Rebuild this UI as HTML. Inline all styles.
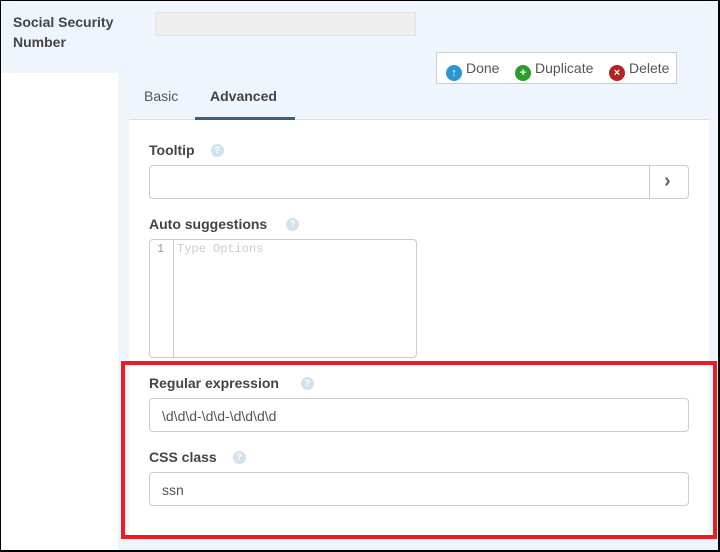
<!DOCTYPE html>
<html><head><meta charset="utf-8"><style>
*{box-sizing:border-box;margin:0;padding:0}
body{width:720px;height:552px;position:relative;overflow:hidden;background:#eff5fd;font-family:"Liberation Sans",Arial,sans-serif;color:#333}
.a{position:absolute}
.lbl{font-size:14px;font-weight:bold;color:#444}
.q{display:inline-block;width:13px;height:13px;border-radius:50%;background:#cfe2ee;color:#fff;font-size:9px;text-align:center;line-height:13px;margin-left:16px;vertical-align:2px}
.inp{border:1px solid #ccc;border-radius:4px;background:#fff;height:34px;font-size:14px;color:#555;padding:9px 12px}
.ic{display:inline-block;width:16px;height:16px;border-radius:50%;color:#fff;font-size:11px;font-weight:bold;text-align:center;line-height:16px;vertical-align:-3px;margin-right:4px}
</style></head><body>
<div class="a" style="left:0;top:0;width:720px;height:1px;background:#000"></div>
<div class="a" style="left:0;top:0;width:1px;height:552px;background:#000"></div>
<div class="a" style="right:0;top:0;width:2px;height:552px;background:#000"></div>
<div class="a" style="left:0;bottom:0;width:720px;height:2px;background:#000"></div>
<div class="a" style="left:1px;top:73px;width:117px;height:477px;background:#fff"></div>
<div class="a lbl" style="left:13px;top:12px;line-height:20px">Social Security<br>Number</div>
<div class="a" style="left:155px;top:12px;width:261px;height:24px;background:#eee;border:1px solid #e3e3e3"></div>
<div class="a" style="left:436px;top:52px;width:241px;height:32px;background:#fff;border:1px solid #ccc;font-size:14px;color:#555;padding:7px 0 0 9px;white-space:nowrap">
<span class="ic" style="background:#2e95d3">↑</span>Done&nbsp;&nbsp;&nbsp;&nbsp;<span class="ic" style="background:#2a9d2a">+</span>Duplicate&nbsp;&nbsp;&nbsp;&nbsp;<span class="ic" style="background:#b52222">×</span>Delete</div>
<div class="a" style="left:144px;top:88px;font-size:14px;color:#555">Basic</div>
<div class="a" style="left:210px;top:88px;font-size:14px;font-weight:bold;color:#444">Advanced</div>
<div class="a" style="left:129px;top:119px;width:580px;height:420px;background:#fff;border-top:1px solid #ddd"></div>
<div class="a" style="left:195px;top:117px;width:100px;height:3px;background:#3f5f78"></div>
<div class="a lbl" style="left:149px;top:142px">Tooltip<span class="q">?</span></div>
<div class="a inp" style="left:149px;top:165px;width:540px"></div>
<div class="a" style="left:649px;top:166px;width:1px;height:32px;background:#ccc"></div>
<div class="a" style="left:664px;top:170px;font-size:20px;font-weight:bold;color:#666">›</div>
<div class="a lbl" style="left:149px;top:216px">Auto suggestions<span class="q" style="margin-left:19px">?</span></div>
<div class="a" style="left:149px;top:239px;width:268px;height:119px;border:1px solid #ccc;border-radius:4px;background:#fff"></div>
<div class="a" style="left:173px;top:240px;width:1px;height:117px;background:#ccc"></div>
<div class="a" style="left:157px;top:242px;font-family:'Liberation Mono',monospace;font-size:12px;color:#999">1</div>
<div class="a" style="left:177px;top:242px;font-family:'Liberation Mono',monospace;font-size:12px;color:#ccc">Type Options</div>
<div class="a" style="left:121px;top:361px;width:596px;height:178px;border:4px solid #ec1c24"></div>
<div class="a lbl" style="left:149px;top:375px">Regular expression<span class="q" style="margin-left:22px">?</span></div>
<div class="a inp" style="left:149px;top:398px;width:540px">\d\d\d-\d\d-\d\d\d\d</div>
<div class="a lbl" style="left:149px;top:449px">CSS class<span class="q">?</span></div>
<div class="a inp" style="left:149px;top:472px;width:540px">ssn</div>
</body></html>
